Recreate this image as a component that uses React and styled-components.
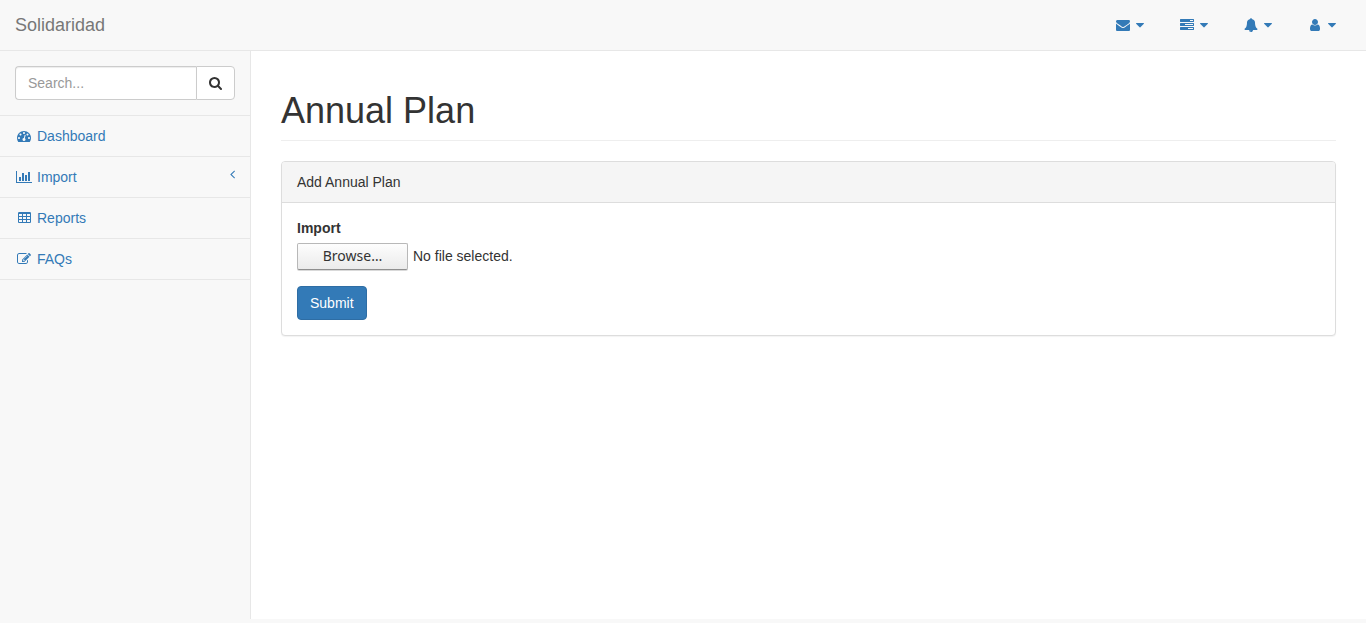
import React, { useRef, useState } from 'react';
import styled, { createGlobalStyle } from 'styled-components';

const GlobalStyle = createGlobalStyle`
  *, *::before, *::after { box-sizing: border-box; }
  body {
    margin: 0;
    background: #f8f8f8;
    color: #333;
    font-family: "Liberation Sans", Arial, sans-serif;
    font-size: 14px;
    line-height: 20px;
  }
  button, input { font: inherit; }
`;

/* Glyph outlines on a 1792-unit em; x and w give the horizontal slice each one occupies. */
const glyphs = {
  envelope: {
    x: 0, w: 1792,
    d: 'M1792 710v794q0 66-47 113t-113 47h-1472q-66 0-113-47t-47-113v-794q44 49 101 87 362 246 497 345 57 42 92.5 65.5t94.5 48 110 24.5h2q51 0 110-24.5t94.5-48 92.5-65.5q170-123 498-345 57-39 100-87zm0-294q0 79-49 151t-122 123q-376 261-468 325-10 7-42.5 31t-54 38.5-52 32.5-57.5 27-50 9h-2q-23 0-50-9t-57.5-27-52-32.5-54-38.5-42.5-31q-91-64-262-182.5t-205-142.5q-62-42-117-115.5t-55-136.5q0-78 41.5-130t118.5-52h1472q65 0 112.5 47t47.5 113z',
  },
  tasks: {
    x: 0, w: 1792,
    d: 'M1024 1408h640v-128h-640v128zm-384-512h1024v-128h-1024v128zm640-512h384v-128h-384v128zm512 832v256q0 26-19 45t-45 19h-1664q-26 0-45-19t-19-45v-256q0-26 19-45t45-19h1664q26 0 45 19t19 45zm0-512v256q0 26-19 45t-45 19h-1664q-26 0-45-19t-19-45v-256q0-26 19-45t45-19h1664q26 0 45 19t19 45zm0-512v256q0 26-19 45t-45 19h-1664q-26 0-45-19t-19-45v-256q0-26 19-45t45-19h1664q26 0 45 19t19 45z',
  },
  bell: {
    x: 0, w: 1792,
    d: 'M912 1696q0-16-16-16-59 0-101.5-42.5t-42.5-101.5q0-16-16-16t-16 16q0 73 51.5 124.5t124.5 51.5q16 0 16-16zm816-288q0 52-38 90t-90 38h-448q0 106-75 181t-181 75-181-75-75-181h-448q-52 0-90-38t-38-90q50-42 91-88t85-119.5 74.5-158.5 50-206 19.5-260q0-152 117-282.5t307-158.5q-8-19-8-39 0-40 28-68t68-28 68 28 28 68q0 20-8 39 190 28 307 158.5t117 282.5q0 139 19.5 260t50 206 74.5 158.5 85 119.5 91 88z',
  },
  user: {
    x: 256, w: 1280,
    d: 'M1536 1399q0 109-62.5 187t-150.5 78h-854q-88 0-150.5-78t-62.5-187q0-85 8.5-160.5t31.5-152 58.5-131 94-89 134.5-34.5q131 128 313 128t313-128q76 0 134.5 34.5t94 89 58.5 131 31.5 152 8.5 160.5zm-256-887q0 159-112.5 271.5t-271.5 112.5-271.5-112.5-112.5-271.5 112.5-271.5 271.5-112.5 271.5 112.5 112.5 271.5z',
  },
  caret: {
    x: 384, w: 1024,
    d: 'M1408 704q0 26-19 45l-448 448q-19 19-45 19t-45-19l-448-448q-19-19-19-45t19-45 45-19h896q26 0 45 19t19 45z',
  },
  search: {
    x: 64, w: 1664,
    d: 'M1216 832q0-185-131.5-316.5t-316.5-131.5-316.5 131.5-131.5 316.5 131.5 316.5 316.5 131.5 316.5-131.5 131.5-316.5zm512 832q0 52-38 90t-90 38q-54 0-90-38l-343-342q-179 124-399 124-143 0-273.5-55.5t-225-150-150-225-55.5-273.5 55.5-273.5 150-225 225-150 273.5-55.5 273.5 55.5 225 150 150 225 55.5 273.5q0 220-124 399l343 343q37 37 37 90z',
  },
  dashboard: {
    x: 0, w: 1792,
    d: 'M384 1152q0-53-37.5-90.5t-90.5-37.5-90.5 37.5-37.5 90.5 37.5 90.5 90.5 37.5 90.5-37.5 37.5-90.5zm192-448q0-53-37.5-90.5t-90.5-37.5-90.5 37.5-37.5 90.5 37.5 90.5 90.5 37.5 90.5-37.5 37.5-90.5zm428 481l101-382q6-26-7.5-48.5t-38.5-29.5-48 6.5-30 39.5l-101 382q-60 5-107 43.5t-63 98.5q-20 77 20 146t117 89 146-20 89-117q16-60-6-117t-72-91zm660-33q0-53-37.5-90.5t-90.5-37.5-90.5 37.5-37.5 90.5 37.5 90.5 90.5 37.5 90.5-37.5 37.5-90.5zm-640-640q0-53-37.5-90.5t-90.5-37.5-90.5 37.5-37.5 90.5 37.5 90.5 90.5 37.5 90.5-37.5 37.5-90.5zm448 192q0-53-37.5-90.5t-90.5-37.5-90.5 37.5-37.5 90.5 37.5 90.5 90.5 37.5 90.5-37.5 37.5-90.5zm320 448q0 261-141 483-19 29-54 29h-1402q-35 0-54-29-141-221-141-483 0-182 71-348t191-286 286-191 348-71 348 71 286 191 191 286 71 348z',
  },
  chart: {
    x: 0, w: 2048,
    d: 'M640 896v512h-256v-512h256zm384-512v1024h-256v-1024h256zm1024 1152v128h-2048v-1536h128v1408h1920zm-640-896v768h-256v-768h256zm384-384v1152h-256v-1152h256z',
  },
  table: {
    x: 64, w: 1664,
    d: [
      'M1728 288v1088q0 66-47 113t-113 47h-1344q-66 0-113-47t-47-113v-1088q0-66 47-113t113-47h1344q66 0 113 47t47 113z',
      ...[192, 704, 1216].flatMap((x) =>
        [384, 768, 1152].map(
          (y) => `M${x + 32} ${y}h320q14 0 23 9t9 23v192q0 14-9 23t-23 9h-320q-14 0-23-9t-9-23v-192q0-14 9-23t23-9z`
        )
      ),
    ].join(''),
  },
  edit: {
    x: 0, w: 1792,
    d: 'M888 1184l116-116-152-152-116 116v56h96v96h56zm440-720q-16-16-33 1l-350 350q-17 17-1 33t33-1l350-350q17-17 1-33zm80 594v190q0 119-84.5 203.5t-203.5 84.5h-832q-119 0-203.5-84.5t-84.5-203.5v-832q0-119 84.5-203.5t203.5-84.5h832q63 0 117 25 15 7 18 23 3 17-9 29l-49 49q-14 14-32 8-23-6-45-6h-832q-66 0-113 47t-47 113v832q0 66 47 113t113 47h832q66 0 113-47t47-113v-126q0-13 9-22l64-64q15-15 35-7t20 29zm-96-738l288 288-672 672h-288v-288zm444 132l-92 92-288-288 92-92q28-28 68-28t68 28l152 152q28 28 28 68t-28 68z',
  },
  angle: {
    x: 576, w: 640,
    d: 'M1203 544q0 13-10 23l-393 393 393 393q10 10 10 23t-10 23l-50 50q-10 10-23 10t-23-10l-466-466q-10-10-10-23t10-23l466-466q10-10 23-10t23 10l50 50q10 10 10 23z',
  },
};

const Svg = styled.svg`
  display: block;
  flex: none;
  height: 14px;
  fill: currentColor;
`;

function Glyph({ name }) {
  const { x, w, d } = glyphs[name];
  return (
    <Svg viewBox={`${x} 0 ${w} 1792`} width={w / 128} fillRule="evenodd" aria-hidden="true">
      <path d={d} />
    </Svg>
  );
}

const IconSlot = styled.span`
  display: flex;
  flex: none;
  justify-content: center;
  width: 18px;
`;

const Navbar = styled.header`
  display: flex;
  justify-content: space-between;
  align-items: center;
  min-height: 51px;
  padding: 0 15px;
  border-bottom: 1px solid #e7e7e7;
`;

const Brand = styled.a`
  color: #777;
  font-size: 18px;
  text-decoration: none;
`;

const TopLinks = styled.ul`
  display: flex;
  gap: 4px;
  margin: 0;
  padding: 0;
  list-style: none;
`;

const TopButton = styled.button`
  display: flex;
  align-items: center;
  gap: 4px;
  height: 50px;
  padding: 0 15px;
  border: 0;
  background: none;
  color: #337ab7;
  cursor: pointer;
`;

const Columns = styled.div`
  display: flex;
  align-items: stretch;
  min-height: calc(100vh - 55px);
`;

const Sidebar = styled.nav`
  flex: none;
  width: 250px;
`;

const Menu = styled.ul`
  margin: 0;
  padding: 0;
  list-style: none;
`;

const SearchForm = styled.form`
  display: flex;
  padding: 15px;
  border-bottom: 1px solid #e7e7e7;
`;

const SearchInput = styled.input`
  flex: 1;
  min-width: 0;
  height: 34px;
  padding: 6px 12px;
  border: 1px solid #ccc;
  border-right: 0;
  border-radius: 4px 0 0 4px;
  background: #fff;
  box-shadow: inset 0 1px 1px rgba(0, 0, 0, 0.075);
  color: #555;
  &::placeholder { color: #999; opacity: 1; }
`;

const SearchButton = styled.button`
  display: flex;
  align-items: center;
  padding: 0 12px;
  border: 1px solid #ccc;
  border-radius: 0 4px 4px 0;
  background: #fff;
  color: #333;
  cursor: pointer;
`;

const MenuItem = styled.li`
  border-bottom: 1px solid #e7e7e7;
`;

const MenuLink = styled.a`
  display: flex;
  align-items: center;
  gap: 4px;
  padding: 10px 15px;
  color: #337ab7;
  text-decoration: none;
  &:hover { background: #eee; }
`;

const Arrow = styled.span`
  align-self: flex-start;
  margin-left: auto;
`;

const Page = styled.main`
  flex: 1;
  min-width: 0;
  padding: 0 30px;
  border-left: 1px solid #e7e7e7;
  background: #fff;
`;

const PageTitle = styled.h1`
  margin: 40px 0 20px;
  padding-bottom: 9px;
  border-bottom: 1px solid #eee;
  font-size: 36px;
  font-weight: 500;
  line-height: 40px;
`;

const Panel = styled.section`
  margin-bottom: 20px;
  border: 1px solid #ddd;
  border-radius: 4px;
  background: #fff;
  box-shadow: 0 1px 1px rgba(0, 0, 0, 0.05);
`;

const PanelHeading = styled.div`
  padding: 10px 15px;
  border-bottom: 1px solid #ddd;
  border-radius: 3px 3px 0 0;
  background: #f5f5f5;
`;

const PanelForm = styled.form`
  display: flex;
  flex-direction: column;
  align-items: flex-start;
  padding: 15px;
`;

const FieldLabel = styled.label`
  margin-bottom: 5px;
  font-weight: 700;
`;

const FileField = styled.div`
  position: relative;
  display: flex;
  align-items: flex-start;
  gap: 5px;
  min-height: 28px;
  margin-bottom: 15px;
`;

const HiddenFile = styled.input`
  position: absolute;
  width: 1px;
  height: 1px;
  overflow: hidden;
  clip-path: inset(50%);
`;

const BrowseButton = styled.button`
  width: 111px;
  height: 27px;
  padding: 0 0 2px;
  border: 1px solid #b8b8b8;
  border-bottom-color: #8f8f8f;
  border-radius: 2px;
  background: linear-gradient(#fdfdfd, #ebebeb);
  box-shadow: 0 1px 0 rgba(0, 0, 0, 0.15);
  color: #333;
  font-family: "Noto Sans", "Open Sans", sans-serif;
  line-height: 20px;
`;

const FileName = styled.output`
  line-height: 26px;
`;

const SubmitButton = styled.button`
  padding: 6px 12px;
  border: 1px solid #2e6da4;
  border-radius: 4px;
  background: #337ab7;
  color: #fff;
  cursor: pointer;
`;

const topItems = [
  ['envelope', 'Messages'],
  ['tasks', 'Tasks'],
  ['bell', 'Alerts'],
  ['user', 'Account'],
];

const menuItems = [
  { icon: 'dashboard', text: 'Dashboard' },
  { icon: 'chart', text: 'Import', nested: true },
  { icon: 'table', text: 'Reports' },
  { icon: 'edit', text: 'FAQs' },
];

export default function App() {
  const fileRef = useRef(null);
  const [fileName, setFileName] = useState('');

  return (
    <>
      <GlobalStyle />
      <Navbar>
        <Brand href="#">Solidaridad</Brand>
        <TopLinks>
          {topItems.map(([icon, label]) => (
            <li key={icon}>
              <TopButton type="button" aria-label={label}>
                <IconSlot><Glyph name={icon} /></IconSlot>
                <Glyph name="caret" />
              </TopButton>
            </li>
          ))}
        </TopLinks>
      </Navbar>
      <Columns>
        <Sidebar>
          <SearchForm onSubmit={(e) => e.preventDefault()}>
            <SearchInput type="text" placeholder="Search..." aria-label="Search" />
            <SearchButton type="submit" aria-label="Search">
              <Glyph name="search" />
            </SearchButton>
          </SearchForm>
          <Menu>
            {menuItems.map(({ icon, text, nested }) => (
              <MenuItem key={text}>
                <MenuLink href="#">
                  <IconSlot><Glyph name={icon} /></IconSlot>
                  {text}
                  {nested && <Arrow><Glyph name="angle" /></Arrow>}
                </MenuLink>
              </MenuItem>
            ))}
          </Menu>
        </Sidebar>
        <Page>
          <PageTitle>Annual Plan</PageTitle>
          <Panel>
            <PanelHeading>Add Annual Plan</PanelHeading>
            <PanelForm onSubmit={(e) => e.preventDefault()}>
              <FieldLabel htmlFor="import-file">Import</FieldLabel>
              <FileField>
                <HiddenFile
                  ref={fileRef}
                  id="import-file"
                  type="file"
                  onChange={(e) => setFileName(e.target.files[0]?.name ?? '')}
                />
                <BrowseButton type="button" onClick={() => fileRef.current.click()}>Browse…</BrowseButton>
                <FileName htmlFor="import-file">{fileName || 'No file selected.'}</FileName>
              </FileField>
              <SubmitButton type="submit">Submit</SubmitButton>
            </PanelForm>
          </Panel>
        </Page>
      </Columns>
    </>
  );
}
